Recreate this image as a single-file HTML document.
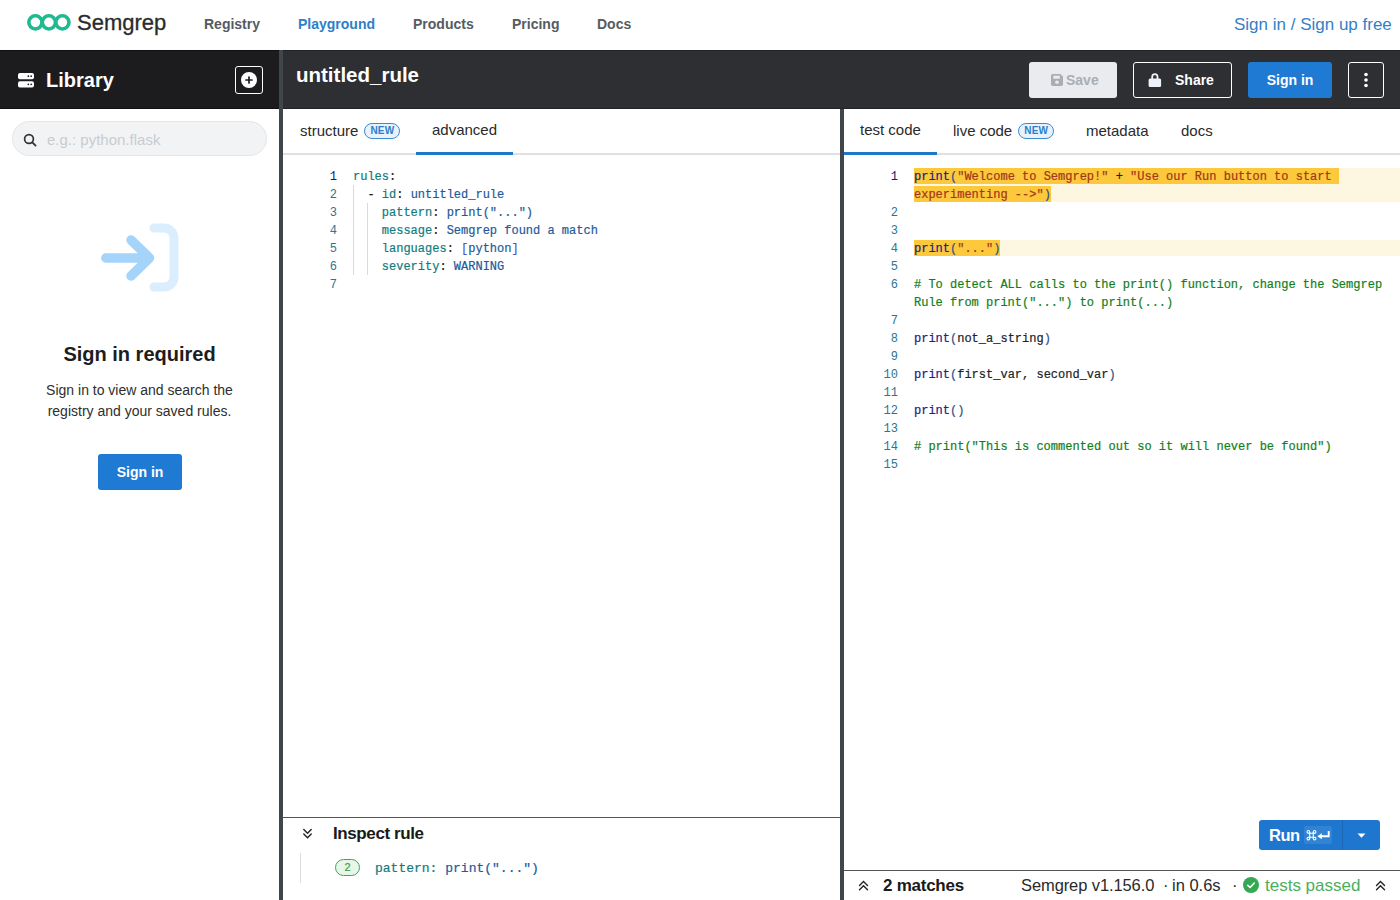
<!DOCTYPE html>
<html><head><meta charset="utf-8">
<style>
*{box-sizing:border-box;margin:0;padding:0}
html,body{width:1400px;height:900px;overflow:hidden;background:#fff;font-family:"Liberation Sans",sans-serif;color:#222}
.abs{position:absolute}
#nav{position:absolute;left:0;top:0;width:1400px;height:50px;background:#fff}
.navi{position:absolute;top:16px;font-size:14px;font-weight:bold;color:#555b62;white-space:nowrap}
#bar{position:absolute;left:0;top:50px;width:1400px;height:59px;background:#2e2f33;box-shadow:inset 0 1px 0 #222326,inset 0 -1px 0 #202124}
#libhead{position:absolute;left:0;top:50px;width:279px;height:59px;background:#1c1c1e;box-shadow:inset 0 1px 0 #0f1012,inset 0 -1px 0 #111214}
#vdiv1{position:absolute;left:279px;top:50px;width:4px;height:850px;background:#3f474d}
#vdiv2{position:absolute;left:840px;top:109px;width:4px;height:791px;background:#3f474d}
.btn{position:absolute;top:62px;height:36px;border-radius:3px;font-size:14px;font-weight:bold;white-space:nowrap}
.tab{position:absolute;font-size:15px;color:#2a2a2a;white-space:nowrap}
.badge{display:inline-block;font-size:10px;font-weight:bold;color:#2a7fc9;background:#e8f2fc;border:1px solid #3d8bd0;border-radius:8px;width:36px;text-align:center;height:16px;line-height:14px;vertical-align:2px;margin-left:6px;letter-spacing:0.2px}
.code{position:absolute;font-family:"Liberation Mono",monospace;font-size:12px;line-height:18px;white-space:pre;-webkit-text-stroke-width:0.2px}
.ln{position:absolute;font-family:"Liberation Mono",monospace;font-size:12px;line-height:18px;text-align:right;color:#2a7590}
.k{color:#0f7c7e}.v{color:#1d5a9c}.p{color:#5158c4}
.f{color:#20208a}.s{color:#a3361a}.c{color:#128019}.pa{color:#32508a}
.hl{}
</style></head><body>
<div id="nav">
  <svg class="abs" style="left:0px;top:0px" width="80" height="40" viewBox="0 0 80 40">
    <circle cx="35.4" cy="22.35" r="6.6" fill="none" stroke="#1fba8f" stroke-width="3.6"/>
    <circle cx="48.9" cy="22.35" r="6.6" fill="none" stroke="#1fba8f" stroke-width="3.6"/>
    <circle cx="62.4" cy="22.35" r="6.6" fill="none" stroke="#1fba8f" stroke-width="3.6"/>
  </svg>
  <div class="abs" style="left:77px;top:10px;font-size:22px;color:#2b2b2b;-webkit-text-stroke:0.3px #2b2b2b">Semgrep</div>
  <div class="navi" style="left:204px">Registry</div>
  <div class="navi" style="left:298px;color:#2c7fca">Playground</div>
  <div class="navi" style="left:413px">Products</div>
  <div class="navi" style="left:512px">Pricing</div>
  <div class="navi" style="left:597px">Docs</div>
  <div class="abs" style="left:1234px;top:15px;font-size:17px;color:#3380c8">Sign in / Sign up free</div>
</div>
<div id="bar"></div>
<div id="libhead">
  <div class="abs" style="left:46px;top:19px;font-size:20px;font-weight:bold;color:#fff">Library</div>
  <div class="abs" style="left:235px;top:16px;width:28px;height:28px;border:1px solid #fff;border-radius:3px"></div>
</div>
<div class="abs" style="left:296px;top:63px;font-size:20.5px;font-weight:bold;color:#fff">untitled_rule</div>
<div class="btn" style="left:1029px;width:88px;background:#e9ebee;color:#a9aeb4"></div>
<svg class="abs" style="left:1051px;top:74px" width="12" height="12" viewBox="0 0 13 14" preserveAspectRatio="none"><path d="M0 2a2 2 0 0 1 2-2H10L13 3V12a2 2 0 0 1-2 2H2a2 2 0 0 1-2-2Z" fill="#a9aeb4"/><rect x="2.5" y="2" width="7" height="3.5" fill="#e9ebee"/><circle cx="6.5" cy="9.5" r="2" fill="#e9ebee"/></svg>
<div class="abs" style="left:1066px;top:72px;font-size:14px;font-weight:bold;color:#a9aeb4">Save</div>
<div class="btn" style="left:1133px;width:99px;border:1px solid #fff;color:#fff"></div>
<svg class="abs" style="left:1148px;top:72px" width="14" height="16" viewBox="0 0 14 16"><path d="M4.2 7.5V4.75a2.65 2.65 0 0 1 5.3 0V7.5" fill="none" stroke="#eef2fb" stroke-width="1.8"/><rect x="0.6" y="6.6" width="12.5" height="8.5" rx="1.5" fill="#eef2fb"/></svg>
<div class="abs" style="left:1175px;top:72px;font-size:14px;font-weight:bold;color:#fff">Share</div>
<div class="btn" style="left:1248px;width:84px;background:#1f7ad4;color:#fff;text-align:center;line-height:36px">Sign in</div>
<div class="btn" style="left:1348px;width:36px;border:1px solid #fff"></div>
<svg class="abs" style="left:1363px;top:72px" width="6" height="16" viewBox="0 0 6 16"><circle cx="3" cy="2.5" r="1.8" fill="#fff"/><circle cx="3" cy="8" r="1.8" fill="#fff"/><circle cx="3" cy="13.5" r="1.8" fill="#fff"/></svg>
<!-- sidebar header icons -->
<svg class="abs" style="left:18px;top:73px" width="16" height="14.5" viewBox="0 0 17 15" preserveAspectRatio="none">
  <rect x="0" y="0" width="17" height="6.5" rx="2" fill="#fff"/>
  <rect x="0" y="8.5" width="17" height="6.5" rx="2" fill="#fff"/>
  <circle cx="11" cy="3.25" r="0.9" fill="#1b1c1f"/><circle cx="14" cy="3.25" r="0.9" fill="#1b1c1f"/>
  <circle cx="11" cy="11.75" r="0.9" fill="#1b1c1f"/><circle cx="14" cy="11.75" r="0.9" fill="#1b1c1f"/>
</svg>
<svg class="abs" style="left:240px;top:71px" width="18" height="18" viewBox="0 0 18 18">
  <circle cx="9" cy="9" r="8" fill="#fff"/>
  <path d="M9 6V12M6 9H12" stroke="#1b1c1f" stroke-width="1.7" stroke-linecap="round"/>
</svg>
<!-- sidebar body -->
<div class="abs" style="left:12px;top:121px;width:255px;height:35px;border-radius:18px;background:#f1f3f5;border:1px solid #e3e5e8"></div>
<svg class="abs" style="left:23px;top:133px" width="14" height="14" viewBox="0 0 14 14">
  <circle cx="6" cy="6" r="4.4" fill="none" stroke="#333" stroke-width="1.7"/>
  <path d="M9.3 9.3L12.6 12.6" stroke="#333" stroke-width="1.8" stroke-linecap="round"/>
</svg>
<div class="abs" style="left:47px;top:131px;font-size:15px;color:#c9cccf">e.g.: python.flask</div>
<svg class="abs" style="left:90px;top:215px" width="100" height="85" viewBox="90 215 100 85">
  <path d="M154 228H164a10 10 0 0 1 10 10V277a10 10 0 0 1 -10 10H154" fill="none" stroke="#dbeefd" stroke-width="9" stroke-linecap="round"/>
  <path d="M105.8 258H149M131 240L149.5 258L131 276" fill="none" stroke="#a4d4fa" stroke-width="9.5" stroke-linecap="round" stroke-linejoin="round"/>
</svg>
<div class="abs" style="left:0;top:343px;width:279px;text-align:center;font-size:20px;font-weight:bold;color:#1d1d1d">Sign in required</div>
<div class="abs" style="left:0;top:380px;width:279px;text-align:center;font-size:14px;line-height:21px;color:#2e2e2e">Sign in to view and search the<br>registry and your saved rules.</div>
<div class="abs" style="left:98px;top:454px;width:84px;height:36px;border-radius:3px;background:#1f7ad4;color:#fff;font-size:14px;font-weight:bold;text-align:center;line-height:36px">Sign in</div>

<!-- left editor -->
<div class="abs" style="left:283px;top:153px;width:557px;height:2px;background:#dfe0e1"></div>
<div class="abs" style="left:416px;top:152px;width:97px;height:3px;background:#1f78c8"></div>
<div class="tab" style="left:300px;top:122px">structure<span class="badge">NEW</span></div>
<div class="tab" style="left:432px;top:121px">advanced</div>
<div class="abs" style="left:353px;top:185px;width:1px;height:90px;background:#d9d9d9"></div>
<div class="abs" style="left:367px;top:203px;width:1px;height:72px;background:#d9d9d9"></div>
<div class="ln" style="left:300px;top:168px;width:37px"><span style="color:#0b216f">1</span><br>2<br>3<br>4<br>5<br>6<br>7</div>
<div class="code" style="left:353px;top:168px;color:#222"><span class="k">rules</span>:
  - <span class="k">id</span>: <span class="v">untitled_rule</span>
    <span class="k">pattern</span>: <span class="v">print("...")</span>
    <span class="k">message</span>: <span class="v">Semgrep found a match</span>
    <span class="k">languages</span>: <span class="p">[</span><span class="v">python</span><span class="p">]</span>
    <span class="k">severity</span>: <span class="v">WARNING</span>
</div>
<!-- inspect rule -->
<div class="abs" style="left:283px;top:817px;width:557px;height:1px;background:#555"></div>
<svg class="abs" style="left:300px;top:826px" width="14" height="14" viewBox="0 0 14 14">
  <path d="M3.8 3.5L7.5 7.3L11.2 3.5M3.8 7.9L7.5 11.7L11.2 7.9" fill="none" stroke="#222" stroke-width="1.4" stroke-linecap="round" stroke-linejoin="miter"/>
</svg>
<div class="abs" style="left:333px;top:824px;font-size:17px;font-weight:bold;color:#1a1a1a;letter-spacing:-0.4px">Inspect rule</div>
<div class="abs" style="left:300px;top:853px;width:1px;height:30px;background:#dcdcdc"></div>
<div class="abs" style="left:335px;top:859px;width:25px;height:17px;border-radius:9px;border:1px solid #3aa757;background:#e8f6ea;color:#3a9e52;font-size:11px;text-align:center;line-height:15px;-webkit-text-stroke:0.2px #3a9e52">2</div>
<div class="code" style="left:375px;top:860px;font-size:13px;line-height:18px;color:#222"><span class="k">pattern</span><span class="k">:</span> <span class="v">print("...")</span></div>

<!-- right editor -->
<div class="abs" style="left:844px;top:153px;width:556px;height:2px;background:#dfe0e1"></div>
<div class="abs" style="left:844px;top:152px;width:93px;height:3px;background:#1f78c8"></div>
<div class="tab" style="left:860px;top:121px">test code</div>
<div class="tab" style="left:953px;top:122px">live code<span class="badge">NEW</span></div>
<div class="tab" style="left:1086px;top:122px">metadata</div>
<div class="tab" style="left:1181px;top:122px">docs</div>
<div class="abs" style="left:914px;top:168px;width:486px;height:34px;background:#fdf7e2"></div>
<div class="abs" style="left:914px;top:240px;width:486px;height:16px;background:#fdf7e2"></div>
<div class="abs" style="left:914px;top:168px;width:425px;height:16px;background:#fcc83c"></div>
<div class="abs" style="left:914px;top:186px;width:137px;height:16px;background:#fcc83c"></div>
<div class="abs" style="left:914px;top:240px;width:86px;height:16px;background:#fcc83c"></div>
<div class="ln" style="left:861px;top:168px;width:37px"><span style="color:#0b216f">1</span><br><br>2<br>3<br>4<br>5<br>6<br><br>7<br>8<br>9<br>10<br>11<br>12<br>13<br>14<br>15</div>
<div class="code" style="left:914px;top:168px;color:#222"><span class="hl"><span class="f">print</span><span class="pa">(</span><span class="s">"Welcome to Semgrep!"</span> + <span class="s">"Use our Run button to start </span></span>
<span class="hl"><span class="s">experimenting --&gt;"</span><span class="pa">)</span></span>


<span class="hl"><span class="f">print</span><span class="pa">(</span><span class="s">"..."</span><span class="pa">)</span></span>

<span class="c"># To detect ALL calls to the print() function, change the Semgrep</span>
<span class="c">Rule from print("...") to print(...)</span>

<span class="f">print</span><span class="pa">(</span>not_a_string<span class="pa">)</span>

<span class="f">print</span><span class="pa">(</span>first_var, second_var<span class="pa">)</span>

<span class="f">print</span><span class="pa">()</span>

<span class="c"># print("This is commented out so it will never be found")</span>
</div>
<!-- run button -->
<div class="abs" style="left:1259px;top:820px;width:121px;height:30px;border-radius:3px;background:#1f76cf"></div>
<div class="abs" style="left:1342px;top:820px;width:1px;height:30px;background:#1b69b6"></div>
<div class="abs" style="left:1270px;top:826px;font-size:16.5px;font-weight:bold;color:#fff;letter-spacing:-0.5px;margin-left:-1px">Run</div>
<div class="abs" style="left:1304px;top:826px;width:28px;height:18px;border-radius:2px;background:#3283d4"></div>
<svg class="abs" style="left:1304px;top:826px" width="28" height="18" viewBox="0 0 28 18">
  <g fill="none" stroke="#fff" stroke-width="1.1">
    <path d="M5.75 5.9V12.6M9.25 5.9V12.6M4.4 7.25H10.6M4.4 11.25H10.6"/>
    <circle cx="4.4" cy="5.9" r="1.35"/><circle cx="10.6" cy="5.9" r="1.35"/>
    <circle cx="4.4" cy="12.6" r="1.35"/><circle cx="10.6" cy="12.6" r="1.35"/>
  </g>
  <path d="M24.7 5V10.2H17" fill="none" stroke="#fff" stroke-width="1.9"/>
  <path d="M13.3 10.2L17.8 7.2V13.2Z" fill="#fff"/>
</svg>
<svg class="abs" style="left:1357px;top:833px" width="9" height="5" viewBox="0 0 9 5"><path d="M0.5 0.5H8.5L4.5 4.8Z" fill="#fff"/></svg>
<!-- status bar -->
<div class="abs" style="left:844px;top:870px;width:556px;height:1px;background:#555"></div>
<svg class="abs" style="left:856px;top:878px" width="14" height="14" viewBox="0 0 14 14">
  <path d="M3.5 7.5L7.5 3.5L11.5 7.5M3.5 11.8L7.5 7.8L11.5 11.8" fill="none" stroke="#222" stroke-width="1.4" stroke-linecap="round"/>
</svg>
<div class="abs" style="left:883px;top:876px;font-size:17px;font-weight:bold;color:#1a1a1a;letter-spacing:-0.25px">2 matches</div>
<div class="abs" style="left:1021px;top:876px;font-size:16.5px;color:#2a2a2a;white-space:nowrap;letter-spacing:-0.1px">Semgrep v1.156.0</div>
<div class="abs" style="left:1163px;top:876px;font-size:16.5px;color:#2a2a2a">·</div>
<div class="abs" style="left:1172px;top:876px;font-size:16.5px;color:#2a2a2a;white-space:nowrap">in 0.6s</div>
<div class="abs" style="left:1232px;top:876px;font-size:16.5px;color:#2a2a2a">·</div>
<svg class="abs" style="left:1243px;top:877px" width="16" height="16" viewBox="0 0 16 16"><circle cx="8" cy="8" r="8" fill="#34a853"/><path d="M4.8 8.3L7.1 10.5L11.3 6" fill="none" stroke="#fff" stroke-width="1.6" stroke-linecap="round" stroke-linejoin="round"/></svg>
<div class="abs" style="left:1265px;top:876px;font-size:17px;color:#4cae5c;white-space:nowrap">tests passed</div>
<svg class="abs" style="left:1373px;top:878px" width="14" height="14" viewBox="0 0 14 14">
  <path d="M3.5 7.5L7.5 3.5L11.5 7.5M3.5 11.8L7.5 7.8L11.5 11.8" fill="none" stroke="#222" stroke-width="1.4" stroke-linecap="round"/>
</svg>
<div id="vdiv1"></div>
<div id="vdiv2"></div>
</body></html>
